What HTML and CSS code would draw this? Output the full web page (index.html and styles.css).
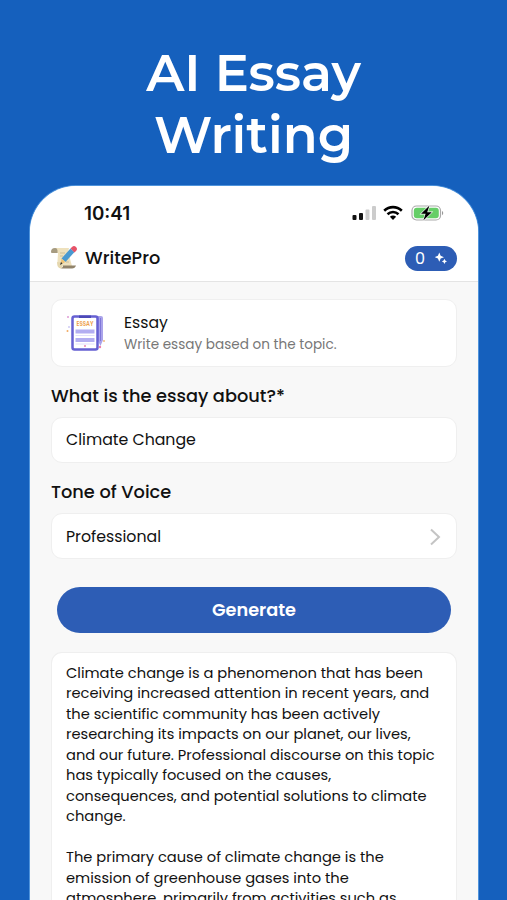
FILE: index.html
```html
<!DOCTYPE html>
<html lang="en">

<head>
    <meta charset="UTF-8">
    <title>WritePro</title>
    <link rel="stylesheet" href="styles.css">
</head>

<body>
    <h1>AI Essay<br>Writing</h1>
    <div class="phone">
        <div class="status-bar">
            <span class="time">10:41</span>
            <div class="status-icons">
                <svg width="25" height="16" viewBox="0 0 25 16">
                    <rect x="0.5" y="10" width="4" height="5" rx="1" fill="#111" />
                    <rect x="7" y="8" width="4" height="7" rx="1" fill="#111" />
                    <rect x="13.5" y="4.500" width="4" height="10.500" rx="1" fill="#ccc" />
                    <rect x="20" y="1" width="4" height="14" rx="1" fill="#ccc" />
                </svg>
                <svg class="wifi" width="20" height="16" viewBox="0 0 20 16">
                    <path d="M1.200 5.700C6.300.9 13.700.9 18.800 5.700M4.500 9.200c3.200-2.900 7.800-2.900 11 0" fill="none" stroke="#000" stroke-width="2.600" />
                    <path d="M6.900 11.800c1.800-1.600 4.400-1.600 6.200 0L10 15z" fill="#000" />
                </svg>
                <svg class="battery" width="34" height="18" viewBox="0 0 34 18">
                    <rect x="1" y="2" width="28.500" height="14" rx="4.500" fill="#fff" stroke="#aaa" stroke-width="1.200" />
                    <rect x="2.800" y="3.800" width="25" height="10.400" rx="3" fill="#65ce67" />
                    <path d="M31 6.700q2.500 2.300 0 4.600z" fill="#999" />
                    <path d="M18.500 1.500 10 9.800h4.600L12.300 16.500 20.800 8.200h-4.600z" fill="#000" stroke="#fff" stroke-width="1.200" paint-order="stroke" />
                </svg>
            </div>
        </div>
        <div class="header">
            <svg class="logo" width="26" height="26" viewBox="0 0 26 26">
                <path d="M4 3h14q-1 3 0 7l3 11H10Q6 21 6.500 16L7 8H3z" fill="#eee1bd" />
                <path d="M0 7q0-4 4-4 3 0 2.500 5H1Q0 8 0 7z" fill="#a69b81" />
                <path d="M12 20.500h13q-1 3-4 3H9q3-.5 3-3z" fill="#91836a" />
                <path d="M6 17q0 6.500 4 6.500 2-1 1-4l-1-2z" fill="#e5d7ae" />
                <path d="M9 8h5M9 11h3M15 17h3" stroke="#cbbd98" />
                <path d="M19.500 3.500 23.500 7 14.500 17 10.500 13.500z" fill="#4999d0" />
                <path d="m21 2q2-2 4 0 2 2 0 4l-1.500 1.500-4-4z" fill="#e65368" />
                <path d="m10.500 13.500 4 3.500-5 2.500z" fill="#efc477" />
                <path d="m10 17 1.500 1.500-2.500 1.500z" fill="#333" />
            </svg>
            <span class="app-name">WritePro</span>
            <div class="credits">
                <span>0</span>
                <svg width="12" height="12" viewBox="0 0 14 14" fill="#fff">
                    <path d="M5 .5 6.600 4.400 10.500 6 6.600 7.600 5 11.500 3.400 7.600-.5 6l3.900-1.600z" />
                    <path d="m11 8 1 2 2 1-2 1-1 2-1-2-2-1 2-1z" />
                </svg>
            </div>
        </div>
        <div class="content">
            <div class="card">
                <svg class="essay-icon" width="40" height="40" viewBox="0 0 40 40">
                    <path d="M32 3h3q2 0 2 2v22l-2.500 6-2.500-5z" fill="#aaa3ea" />
                    <path d="M34.500 5v23" stroke="#7f77d8" />
                    <rect x="6.500" y="3.500" width="25" height="33" rx="2" fill="#fff" stroke="#6660d2" stroke-width="2.500" />
                    <path d="M13 2.500h12v2.500H13z" fill="#4c49b7" />
                    <text x="19" y="13" text-anchor="middle" textLength="17" lengthAdjust="spacingAndGlyphs">ESSAY</text>
                    <path d="M9.500 18.500h19M9.500 27h19" stroke="#b3aef1" stroke-width="4" />
                    <path d="M9.500 22.500h19M9.500 31h19" stroke="#e3e0fc" />
                    <circle cx="2" cy="4" r="1" fill="#df9bd5" />
                    <circle cx="1.500" cy="18" r="1" fill="#f1ab63" />
                    <circle cx="3" cy="14" r=".8" fill="#aaa4ed" />
                    <circle cx="34" cy="34" r="1.200" fill="#ed7eab" />
                    <circle cx="38" cy="28" r=".9" fill="#f0b36f" />
                    <circle cx="19" cy="33" r="1" fill="#e785b5" />
                </svg>
                <div class="card-text">
                    <div class="card-title">Essay</div>
                    <div class="card-desc">Write essay based on the topic.</div>
                </div>
            </div>
            <h2>What is the essay about?*</h2>
            <div class="field">Climate Change</div>
            <h2>Tone of Voice</h2>
            <div class="field select">
                <span>Professional</span>
                <svg width="12" height="18" viewBox="0 0 12 18">
                    <path d="m2 1.500 8 7.500-8 7.500" fill="none" stroke="#c4c4c4" stroke-width="2" />
                </svg>
            </div>
            <button>Generate</button>
            <div class="result">
                <p>
                    Climate change is a phenomenon that has been<br>
                    receiving increased attention in recent years, and<br>
                    the scientific community has been actively<br>
                    researching its impacts on our planet, our lives,<br>
                    and our future. Professional discourse on this topic<br>
                    has typically focused on the causes,<br>
                    consequences, and potential solutions to climate<br>
                    change.
                </p>
                <p>
                    The primary cause of climate change is the<br>
                    emission of greenhouse gases into the<br>
                    atmosphere, primarily from activities such as
                </p>
            </div>
        </div>
    </div>
</body>

</html>
```

FILE: styles.css
```css
* {
    box-sizing: border-box;
}

body {
    margin: 0;
    height: 900px;
    overflow: hidden;
    background: #1560bd;
    font-family: Poppins, Inter, sans-serif;
    color: #111;
}

h1 {
    margin: 0;
    padding-top: 42px;
    height: 186px;
    color: #fff;
    font-family: Montserrat, Inter, sans-serif;
    font-size: 51px;
    font-weight: 600;
    line-height: 62px;
    text-align: center;
}

.phone {
    display: flex;
    flex-direction: column;
    width: 448px;
    height: 714px;
    margin-left: 30px;
    background: #f8f8f8;
    border-radius: 46px 46px 0 0;
    overflow: hidden;
    box-shadow: 0 0 0 1px #4f94dc;
}

.status-bar {
    display: flex;
    flex-shrink: 0;
    justify-content: space-between;
    align-items: center;
    height: 54px;
    padding: 0 33px 0 54px;
    background: #fff;
}

.time {
    font-family: Inter, sans-serif;
    font-size: 18.8px;
    font-weight: 600;
}

.status-icons {
    display: flex;
    align-items: center;
}

.wifi {
    margin-left: 6px;
}

.battery {
    margin-left: 8px;
}

.header {
    display: flex;
    flex-shrink: 0;
    align-items: center;
    height: 42px;
    padding: 0 21px 5px;
    background: #fff;
    border-bottom: 1px solid #e4e4e4;
}

.app-name {
    margin-left: 8px;
    padding-bottom: 1px;
    font-size: 17.7px;
    font-weight: 500;
}

.credits {
    display: flex;
    justify-content: center;
    align-items: center;
    gap: 10px;
    width: 52px;
    height: 25px;
    margin-left: auto;
    border-radius: 13px;
    background: #2d5db5;
    color: #fff;
    font-size: 16px;
}

.content {
    display: flex;
    flex: 1;
    flex-direction: column;
    min-height: 0;
    padding: 17px 21px 0;
}

.card {
    display: flex;
    flex-shrink: 0;
    align-items: center;
    height: 68px;
    padding-left: 14px;
    background: #fff;
    border: 1px solid #efefef;
    border-radius: 11px;
}

.essay-icon text {
    font-size: 6.5px;
    font-weight: 600;
    fill: #eda04b;
}

.card-text {
    margin-left: 18px;
    padding-top: 2px;
}

.card-title {
    font-size: 15.7px;
    line-height: 22px;
}

.card-desc {
    color: #777;
    font-size: 13.6px;
    line-height: 22px;
}

h2 {
    flex-shrink: 0;
    margin: 0;
    padding-top: 15px;
    height: 50px;
    font-size: 17.75px;
    font-weight: 500;
    line-height: 27px;
}

.field {
    display: flex;
    flex-shrink: 0;
    justify-content: space-between;
    align-items: center;
    height: 46px;
    padding: 0 15px 1px 14px;
    background: #fff;
    border: 1px solid #efefef;
    border-radius: 11px;
    font-size: 15.75px;
}

.select {
    padding-top: 1px;
    padding-bottom: 0;
}

button {
    flex-shrink: 0;
    width: 394px;
    height: 46px;
    margin: 28px auto 19px;
    padding-bottom: 2px;
    border: none;
    border-radius: 23px;
    background: #2d5db5;
    color: #fff;
    font-family: inherit;
    font-size: 17.7px;
    font-weight: 600;
}

.result {
    flex: 1;
    min-height: 0;
    padding: 10px 14px 0;
    background: #fff;
    border: 1px solid #efefef;
    border-bottom: none;
    border-radius: 11px 11px 0 0;
    font-size: 14.66px;
    line-height: 20.45px;
    white-space: nowrap;
}

.result p {
    margin: 0 0 20.45px;
}
```
